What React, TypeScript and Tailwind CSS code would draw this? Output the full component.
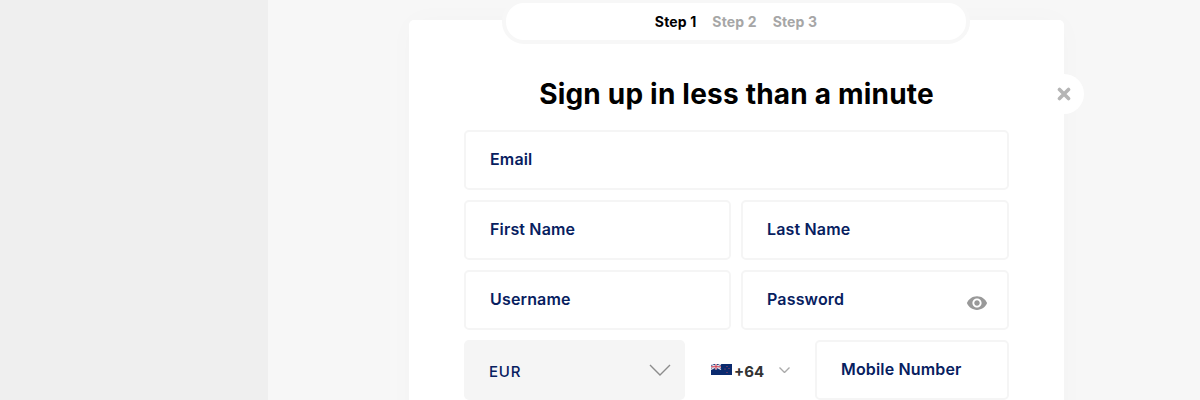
import React from 'react';
import { MdVisibility } from 'react-icons/md';

const font = { fontFamily: 'Inter, "Liberation Sans", sans-serif' };

// Plain text field, the label is the placeholder
const Field = ({ label, className = '' }: { label: string; className?: string }) => (
  <input
    placeholder={label}
    className={`h-[60px] w-full min-w-0 rounded-[5px] border-2 border-[#f5f5f5] bg-white pb-[2px] pl-6 pr-4 text-[16px] font-semibold tracking-[0.01em] outline-none placeholder:text-[#07205f] ${className}`}
  />
);

const Chevron = ({ width, height, color }: { width: number; height: number; color: string }) => (
  <svg width={width} height={height} viewBox="0 0 22 12" fill="none" preserveAspectRatio="none">
    <path d="M1 1l10 10L21 1" stroke={color} strokeWidth="1.4" vectorEffect="non-scaling-stroke" />
  </svg>
);

const NzFlag = () => (
  <svg width="21" height="11" viewBox="0 0 21 11" className="mt-[-1px] shrink-0">
    <rect width="21" height="11" fill="#0a2a6e" />
    <rect width="10" height="5.5" fill="#27407f" />
    <path d="M0 0l10 5.5M10 0L0 5.5" stroke="#e8e8f0" strokeWidth="1.2" />
    <path d="M5 0v5.5M0 2.75h10" stroke="#f4f4f8" strokeWidth="1.8" />
    <path d="M5 0v5.5M0 2.75h10" stroke="#d0364a" strokeWidth="1" />
    <circle cx="16" cy="2.5" r="0.6" fill="#c8475c" />
    <circle cx="14" cy="5" r="0.6" fill="#c8475c" />
    <circle cx="18" cy="4.5" r="0.6" fill="#c8475c" />
    <circle cx="16" cy="8.5" r="0.6" fill="#c8475c" />
  </svg>
);

export default function App() {
  return (
    <div style={font} className="flex h-[400px] w-[1200px] overflow-hidden bg-[#f7f7f7]">
      <aside className="w-[268px] shrink-0 bg-[#efefef]" />

      <main className="flex-1 pl-[141px] pt-5">
        <div className="relative w-[655px] rounded-[5px] bg-white px-[55px] pb-10 shadow-[0_0_30px_rgba(0,0,0,0.02)]">
          {/* steps pill */}
          <div className="absolute -top-[21px] left-[93px] flex h-[45px] w-[468px] items-center justify-center gap-4 rounded-[22px] border-[4px] border-[#f7f7f7] bg-white text-[14px] font-bold tracking-[0.01em] text-[#a6a6a6]">
            <span className="text-black">Step 1</span>
            <span>Step 2</span>
            <span>Step 3</span>
          </div>

          {/* close */}
          <div className="absolute -right-5 top-[54px] flex h-10 w-10 items-center justify-center rounded-full bg-white">
            <svg width="14" height="14" viewBox="0 0 14 14" fill="none">
              <path d="M2.5 2.5l9 9M11.5 2.5l-9 9" stroke="#b5b5b5" strokeWidth="3.6" strokeLinecap="round" />
            </svg>
          </div>

          <h1 className="pb-[18px] pt-[56px] text-center text-[28px] font-bold leading-[36px] tracking-[0.2px] text-black">
            Sign up in less than a minute
          </h1>

          <div className="flex flex-col gap-2.5">
            <Field label="Email" />
            <div className="grid grid-cols-[267px_268px] gap-2.5">
              <Field label="First Name" />
              <Field label="Last Name" />
            </div>
            <div className="grid grid-cols-[267px_268px] gap-2.5">
              <Field label="Username" />
              <div className="relative">
                <Field label="Password" />
                <MdVisibility size={22} className="absolute right-[21px] top-[22px] text-[#999]" />
              </div>
            </div>
            <div className="flex">
              <div className="flex h-[60px] w-[221px] shrink-0 items-center justify-between rounded-[5px] bg-[#f5f5f5] pl-[25px] pr-[14px] text-[15px] font-medium tracking-[0.05em] text-[#07205f]">
                <span className="pt-[4px]">EUR</span>
                <Chevron width={22} height={12} color="#8c8c8c" />
              </div>
              <div className="flex w-[130px] shrink-0 items-center pl-[26px]">
                <NzFlag />
                <span className="ml-[2px] pt-[4px] text-[15px] font-bold text-[#333]">+64</span>
                <span className="ml-[15px]">
                  <Chevron width={11} height={6} color="#aaa" />
                </span>
              </div>
              <Field label="Mobile Number" className="flex-1" />
            </div>
          </div>
        </div>
      </main>
    </div>
  );
}
